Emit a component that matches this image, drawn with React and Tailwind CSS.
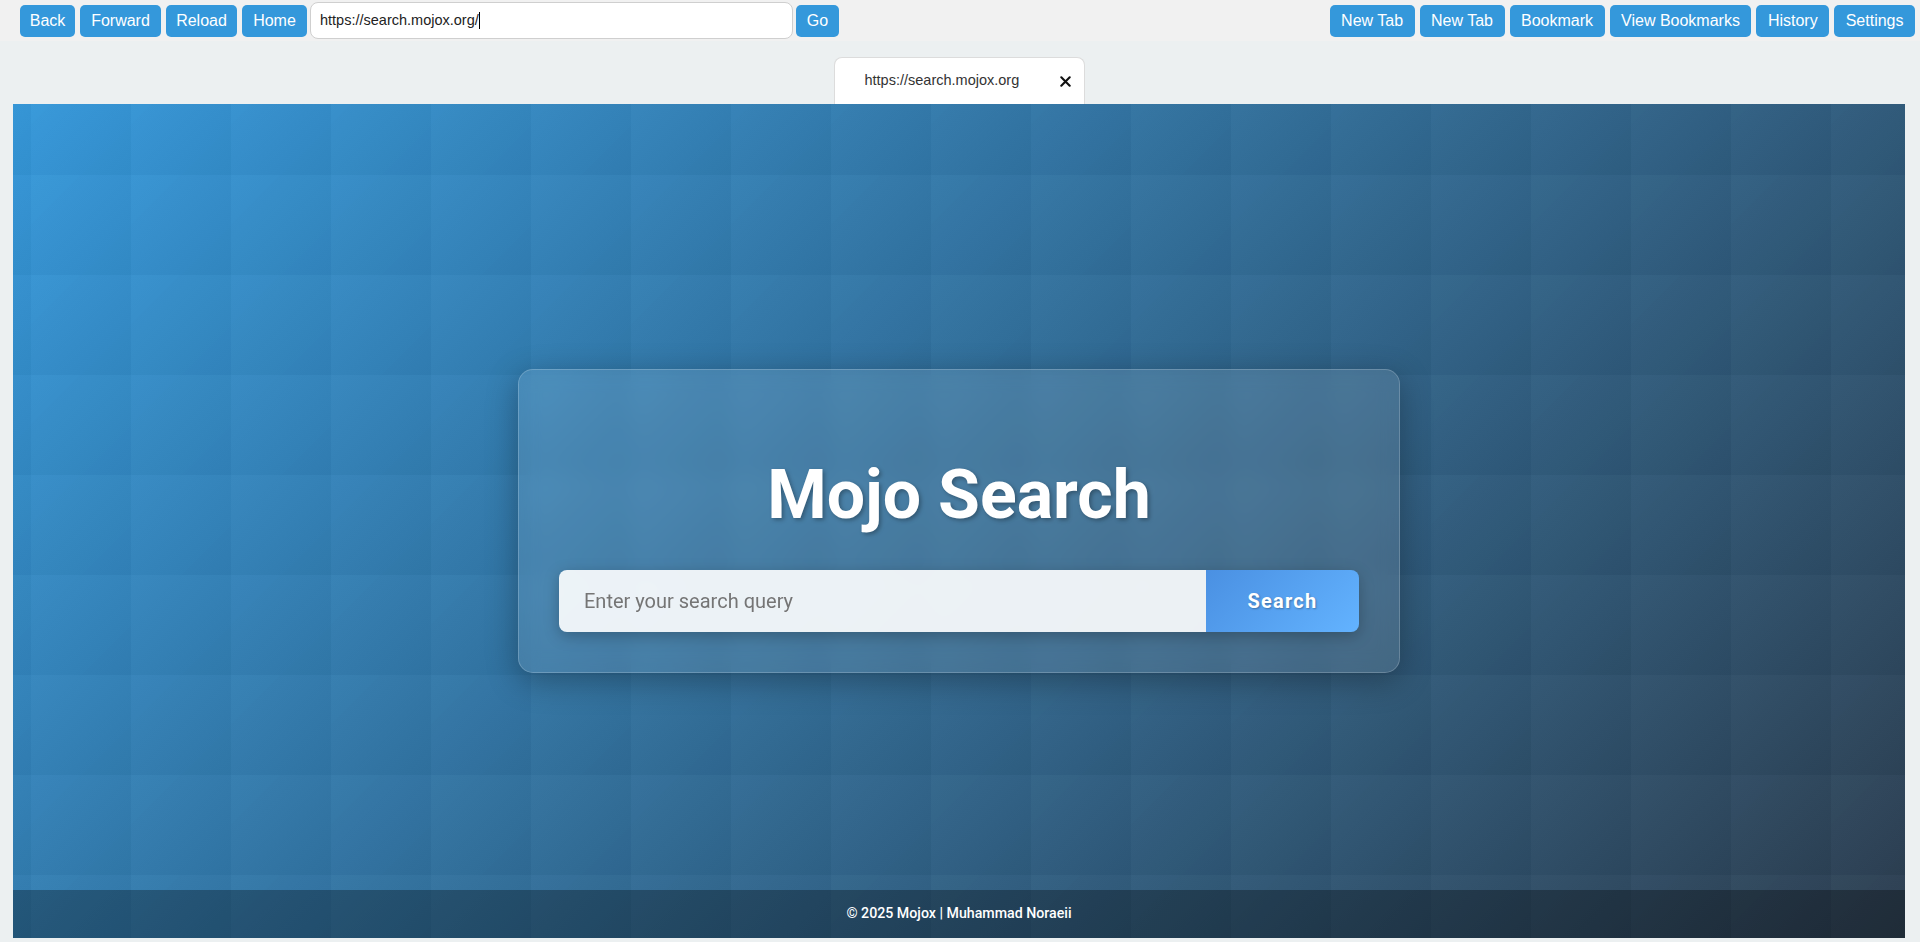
import React from "react";

const LEFT_BUTTONS = [
  { label: "Back", w: "w-[55px]" },
  { label: "Forward", w: "w-[81px]" },
  { label: "Reload", w: "w-[71px]" },
  { label: "Home", w: "w-[65px]" },
];
const RIGHT_BUTTONS = ["New Tab", "New Tab", "Bookmark", "View Bookmarks", "History", "Settings"];

function ToolButton({ label, className = "px-[11.5px]" }) {
  return (
    <button
      className={`h-[32px] ${className} rounded-[5px] bg-[#3498db] text-white text-[16px] leading-none font-['Liberation_Sans',Arial,sans-serif] whitespace-nowrap`}
    >
      {label}
    </button>
  );
}

function CloseIcon() {
  return (
    <svg width="11" height="11" viewBox="0 0 11 11" aria-hidden="true">
      <path d="M1.3 1.3 L9.7 9.7 M9.7 1.3 L1.3 9.7" stroke="#111" strokeWidth="2.1" strokeLinecap="round" />
    </svg>
  );
}

export default function App() {
  return (
    <div className="w-[1920px] h-[942px] flex flex-col bg-[#ecf0f1] overflow-hidden font-['Liberation_Sans',Arial,sans-serif]">
      {/* Toolbar */}
      <div className="h-[41px] shrink-0 flex items-center justify-between pl-[20px] pr-[5px] bg-[#f1f1f1]">
        <div className="flex items-center gap-[5px]">
          {LEFT_BUTTONS.map((b) => (
            <ToolButton key={b.label} label={b.label} className={b.w} />
          ))}
          <div className="-mx-[2px] w-[483px] h-[37px] flex items-center pl-[9px] bg-white border border-[#cfcfcf] rounded-[8px] text-[14.5px] text-[#222]">
            https://search.mojox.org/
            <span className="inline-block w-px h-[17px] bg-black" />
          </div>
          <ToolButton label="Go" className="w-[43px]" />
        </div>
        <div className="flex items-center gap-[5px]">
          {RIGHT_BUTTONS.map((b, i) => (
            <ToolButton key={i} label={b} />
          ))}
        </div>
      </div>

      {/* Tab strip */}
      <div className="h-[63px] shrink-0 flex items-end justify-center ml-[13px] mr-[15px]">
        <div className="w-[251px] h-[47px] flex items-center pl-[30px] pr-[13px] bg-white border border-b-0 border-[#dcdcdc] rounded-t-[8px]">
          <span className="text-[14.5px] text-[#333]">https://search.mojox.org</span>
          <span className="ml-auto flex items-center">
            <CloseIcon />
          </span>
        </div>
      </div>

      {/* Page */}
      <div className="relative h-[834px] shrink-0 ml-[13px] mr-[15px] flex items-center justify-center bg-[linear-gradient(135deg,rgba(255,255,255,0.035),rgba(0,0,0,0.045)),linear-gradient(135deg,#3498db,#2c3e50)] [background-size:100px_100px,100%_100%] [background-position:18px_71px,0_0] font-['Roboto',Arial,sans-serif]">
        <div className="w-[882px] p-[40px] rounded-[15px] border border-white/20 bg-white/10 backdrop-blur-[10px] shadow-[0_8px_32px_rgba(0,0,0,0.3)] flex flex-col items-center">
          <h1 className="mt-[45px] mb-[33px] text-[68px] leading-[1.2] font-bold text-white [text-shadow:2px_2px_4px_rgba(0,0,0,0.3)]">
            Mojo Search
          </h1>
          <div className="w-[800px] h-[62px] flex rounded-[8px] overflow-hidden shadow-[0_4px_15px_rgba(0,0,0,0.25)]">
            <input
              type="text"
              placeholder="Enter your search query"
              className="flex-1 min-w-0 pl-[25px] pr-[15px] bg-white/90 text-[20px] text-[#333] placeholder:text-[#757575] outline-none"
            />
            <button className="w-[153px] bg-[linear-gradient(135deg,#4a90e2,#63b3ff)] text-white text-[20px] font-bold tracking-[1.2px] [text-shadow:1px_1px_2px_rgba(0,0,0,0.3)]">
              Search
            </button>
          </div>
        </div>

        {/* Footer overlay */}
        <div className="absolute bottom-0 inset-x-0 h-[48px] flex items-center justify-center bg-black/30 text-white text-[14.2px] font-medium">
          © 2025 Mojox | Muhammad Noraeii
        </div>
      </div>
    </div>
  );
}
